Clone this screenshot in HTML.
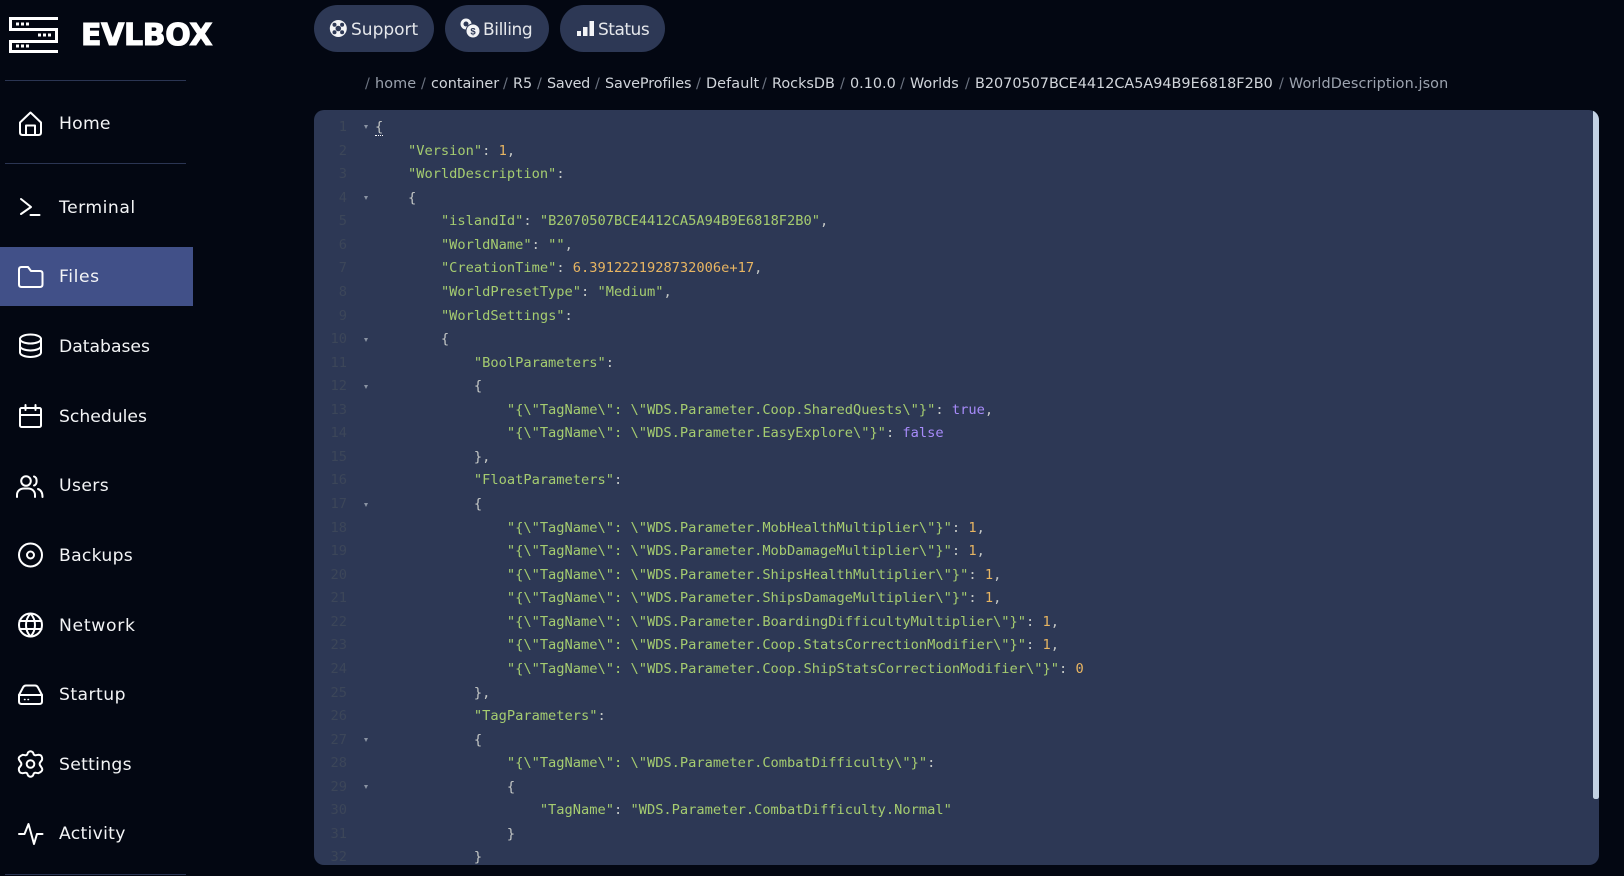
<!DOCTYPE html>
<html><head><meta charset="utf-8"><title>EVLBOX</title>
<style>
html,body{margin:0;padding:0;width:1624px;height:876px;overflow:hidden;background:#030712;}
body{position:relative;font-family:"DejaVu Sans","Liberation Sans",sans-serif;color:#fff}
.a{position:absolute;white-space:pre}
.div{position:absolute;left:5px;width:181px;height:1px;background:#2b3553}
.act{position:absolute;left:0;top:247px;width:193px;height:59px;background:#415088}
.nav{position:absolute;left:59px;font-size:17.2px;line-height:24px;color:#f3f4f6;white-space:pre}
.pill{position:absolute;top:5px;height:47px;border-radius:24px;background:#2d3855}
.pt{position:absolute;top:17.500px;font-size:17px;line-height:24px;color:#e5e7eb;white-space:pre}
.bc{position:absolute;top:73px;font-size:14.4px;line-height:22px;white-space:pre;color:#d1d5db}
.g{color:#9ca3af}
.sl{color:#6b7280}
.panel{position:absolute;left:314px;top:110px;width:1285px;height:755px;background:#2d3855;border-radius:10px;overflow:hidden}
.code,.nums{position:absolute;top:6px;font-family:"DejaVu Sans Mono","Liberation Mono",monospace;font-size:13.7px;line-height:23.57px;white-space:pre}
.code{left:61px;color:#c5c8c6}
.nums{left:0;width:33px;text-align:right;color:#3c4659}
.s{color:#a5cc70}.n{color:#e8b562}.b{color:#a78bfa}
.f{position:absolute;left:50px;width:0;height:0;border-left:2.5px solid transparent;border-right:2.5px solid transparent;border-top:4px solid #8a93a3}
.bar{position:absolute;right:0;top:0;width:6px;height:689px;background:#c3d2e4;border-radius:0 8px 3px 3px}
</style></head><body>
<div class="act"></div>

<svg class="a" style="left:0;top:0" width="240" height="876" viewBox="0 0 240 876" fill="none" stroke="#fff" stroke-width="2" stroke-linecap="round" stroke-linejoin="round">
<!-- logo -->
<g stroke="none" fill="#fff">
<path d="M9 17H58V20H12V28H58V43H12V50H58V53H9V40H55V31H9Z"/>
<rect x="16" y="22.5" width="3" height="3"/><rect x="21" y="22.5" width="3" height="3"/><rect x="26" y="22.5" width="3" height="3"/>
<rect x="38" y="33.5" width="3" height="3"/><rect x="43" y="33.5" width="3" height="3"/><rect x="48" y="33.5" width="3" height="3"/>
<rect x="16" y="44.5" width="3" height="3"/><rect x="21" y="44.5" width="3" height="3"/><rect x="26" y="44.5" width="3" height="3"/>
</g>
<!-- home -->
<path d="M20 122.5L30.5 112.5L41 122.5V132.5Q41 135 38.5 135H22.5Q20 135 20 132.5Z"/>
<path d="M26 135V125.5H35V135"/>
<!-- terminal -->
<path d="M21 199L31 207L21 214"/><path d="M30.5 215H39.5"/>
<!-- folder -->
<path d="M19 269.5Q19 267 21.5 267H28L31 271H40Q42.500 271 42.500 273.500V284.500Q42.500 287 40 287H21.500Q19 287 19 284.500Z"/>
<!-- database -->
<ellipse cx="30.500" cy="339" rx="10.500" ry="4.500"/>
<path d="M20 339V352.500C20 355 25 357 30.500 357S41 355 41 352.500V339"/>
<path d="M20 346C20 348.500 25 350.500 30.500 350.500S41 348.500 41 346"/>
<!-- calendar -->
<rect x="20" y="408" width="21" height="19" rx="1.500"/><path d="M20 415H41M25.500 405V410M35.500 405V410"/>
<!-- users -->
<circle cx="26" cy="481" r="4.800"/><path d="M17 497V495C17 491 20 488.500 24 488.500H28C32 488.500 35 491 35 495V497"/>
<path d="M34 476.500C37.500 477.500 37.500 484.500 34 485.500"/><path d="M38 489C41 490 42.500 492.500 42.500 497"/>
<!-- backups -->
<circle cx="30.500" cy="555" r="11.500"/><circle cx="30.500" cy="555" r="3.500"/>
<!-- network -->
<circle cx="30.500" cy="625" r="11.500"/><path d="M19.500 621H41.500M19.500 629H41.500"/><path d="M30.500 613.500C24.500 620 24.500 630 30.500 636.500C36.500 630 36.500 620 30.500 613.500Z"/>
<!-- startup -->
<path d="M19 695L23 687.500Q24 685.500 26 685.500H35Q37 685.500 38 687.500L42 695V701.500Q42 704 39.500 704H21.500Q19 704 19 701.500Z"/><path d="M19 695H42"/>
<path d="M24.500 699.500H25M28 699.500H28.500" stroke-width="1.500"/>
<!-- settings -->
<circle cx="30.500" cy="764" r="3.800"/>
<path d="M28 752.500Q30.500 750 33 752.500L33.800 754.500Q34.500 755.500 36 755.200L38.200 754.800Q41.500 754.800 42 757.500T41.200 761L39.800 763Q39.500 764 39.800 765L41.200 767Q42.800 769 42 770.500T38.200 773.200L36 772.800Q34.500 772.500 33.800 773.500L33 775.500Q30.500 778 28 775.500L27.200 773.500Q26.500 772.500 25 772.800L22.800 773.200Q19.500 773.200 19 770.500T19.800 767L21.200 765Q21.500 764 21.200 763L19.800 761Q18.200 759 19 757.500T22.800 754.800L25 755.200Q26.500 755.500 27.200 754.500Z"/>
<!-- activity -->
<path d="M19 834H24.500L28.500 824L34 844L37 834H42.500"/>
</svg>

<div class="a" style="left:81px;top:18px;font-family:'DejaVu Sans',sans-serif;font-weight:700;font-size:30px;line-height:36px;letter-spacing:-.35px;color:#fff;-webkit-text-stroke:1.1px #fff">EVLBOX</div>

<div class="div" style="top:80px"></div>
<div class="div" style="top:163px"></div>
<div class="div" style="top:874px"></div>

<div class="nav" style="top:112px;letter-spacing:.25px">Home</div>
<div class="nav" style="top:196px;letter-spacing:.5px">Terminal</div>
<div class="nav" style="top:265px;letter-spacing:.6px">Files</div>
<div class="nav" style="top:335px">Databases</div>
<div class="nav" style="top:405px">Schedules</div>
<div class="nav" style="top:474px;letter-spacing:.4px">Users</div>
<div class="nav" style="top:544px;letter-spacing:.3px">Backups</div>
<div class="nav" style="top:614px;letter-spacing:.7px">Network</div>
<div class="nav" style="top:683px;letter-spacing:.45px">Startup</div>
<div class="nav" style="top:753px;letter-spacing:.3px">Settings</div>
<div class="nav" style="top:822px;letter-spacing:.3px">Activity</div>

<div class="pill" style="left:314px;width:120px"></div>
<div class="pill" style="left:445px;width:104px"></div>
<div class="pill" style="left:560px;width:105px"></div>

<svg class="a" style="left:314px;top:5px" width="360" height="47" viewBox="314 5 360 47">
<circle cx="338.300" cy="28.500" r="8.500" fill="#f3f4f6"/>
<circle cx="338.300" cy="28.500" r="2.800" fill="#2d3855"/>
<g fill="#2d3855"><circle cx="334.500" cy="24.700" r="2"/><circle cx="342.100" cy="24.700" r="2"/><circle cx="334.500" cy="32.300" r="2"/><circle cx="342.100" cy="32.300" r="2"/></g>
<circle cx="466" cy="24" r="5.500" fill="#f3f4f6"/><circle cx="466" cy="24" r="2.500" fill="#2d3855"/>
<circle cx="473" cy="31" r="7" fill="#f3f4f6" stroke="#2d3855" stroke-width="1"/>
<text x="473" y="34.500" font-family="Liberation Sans" font-size="9.500" font-weight="700" fill="#2d3855" text-anchor="middle">$</text>
<rect x="577" y="31" width="4" height="5" fill="#f3f4f6"/><rect x="583" y="27" width="4.500" height="9" fill="#f3f4f6"/><rect x="589.500" y="21" width="4.500" height="15" fill="#f3f4f6"/>
</svg>
<div class="pt" style="left:351px">Support</div>
<div class="pt" style="left:483px;letter-spacing:-.4px">Billing</div>
<div class="pt" style="left:598px;letter-spacing:-.5px">Status</div>

<div class="bc sl" style="left:365px">/</div>
<div class="bc g" style="left:375px;letter-spacing:.1px">home</div>
<div class="bc sl" style="left:421px">/</div>
<div class="bc" style="left:431px">container</div>
<div class="bc sl" style="left:503px">/</div>
<div class="bc" style="left:513px">R5</div>
<div class="bc sl" style="left:537px">/</div>
<div class="bc" style="left:547px;letter-spacing:-.3px">Saved</div>
<div class="bc sl" style="left:595px">/</div>
<div class="bc" style="left:605px;letter-spacing:-.1px">SaveProfiles</div>
<div class="bc sl" style="left:696px">/</div>
<div class="bc" style="left:706px;letter-spacing:.1px">Default</div>
<div class="bc sl" style="left:762px">/</div>
<div class="bc" style="left:772px">RocksDB</div>
<div class="bc sl" style="left:840px">/</div>
<div class="bc" style="left:850px">0.10.0</div>
<div class="bc sl" style="left:900px">/</div>
<div class="bc" style="left:910px">Worlds</div>
<div class="bc sl" style="left:965px">/</div>
<div class="bc" style="left:975px">B2070507BCE4412CA5A94B9E6818F2B0</div>
<div class="bc sl" style="left:1279px">/</div>
<div class="bc g" style="left:1289px;letter-spacing:.1px">WorldDescription.json</div>

<div class="panel">
<div class="nums">1
2
3
4
5
6
7
8
9
10
11
12
13
14
15
16
17
18
19
20
21
22
23
24
25
26
27
28
29
30
31
32
33</div>
<i class="f" style="top:15px"></i><i class="f" style="top:86px"></i><i class="f" style="top:228px"></i><i class="f" style="top:275px"></i><i class="f" style="top:393px"></i><i class="f" style="top:628px"></i><i class="f" style="top:675px"></i>
<div class="code"><span style="border-bottom:1px dotted #fff">{</span>
    <span class="s">"Version"</span>: <span class="n">1</span>,
    <span class="s">"WorldDescription"</span>:
    {
        <span class="s">"islandId"</span>: <span class="s">"B2070507BCE4412CA5A94B9E6818F2B0"</span>,
        <span class="s">"WorldName"</span>: <span class="s">""</span>,
        <span class="s">"CreationTime"</span>: <span class="n">6.3912221928732006e+17</span>,
        <span class="s">"WorldPresetType"</span>: <span class="s">"Medium"</span>,
        <span class="s">"WorldSettings"</span>:
        {
            <span class="s">"BoolParameters"</span>:
            {
                <span class="s">"{\"TagName\": \"WDS.Parameter.Coop.SharedQuests\"}"</span>: <span class="b">true</span>,
                <span class="s">"{\"TagName\": \"WDS.Parameter.EasyExplore\"}"</span>: <span class="b">false</span>
            },
            <span class="s">"FloatParameters"</span>:
            {
                <span class="s">"{\"TagName\": \"WDS.Parameter.MobHealthMultiplier\"}"</span>: <span class="n">1</span>,
                <span class="s">"{\"TagName\": \"WDS.Parameter.MobDamageMultiplier\"}"</span>: <span class="n">1</span>,
                <span class="s">"{\"TagName\": \"WDS.Parameter.ShipsHealthMultiplier\"}"</span>: <span class="n">1</span>,
                <span class="s">"{\"TagName\": \"WDS.Parameter.ShipsDamageMultiplier\"}"</span>: <span class="n">1</span>,
                <span class="s">"{\"TagName\": \"WDS.Parameter.BoardingDifficultyMultiplier\"}"</span>: <span class="n">1</span>,
                <span class="s">"{\"TagName\": \"WDS.Parameter.Coop.StatsCorrectionModifier\"}"</span>: <span class="n">1</span>,
                <span class="s">"{\"TagName\": \"WDS.Parameter.Coop.ShipStatsCorrectionModifier\"}"</span>: <span class="n">0</span>
            },
            <span class="s">"TagParameters"</span>:
            {
                <span class="s">"{\"TagName\": \"WDS.Parameter.CombatDifficulty\"}"</span>:
                {
                    <span class="s">"TagName"</span>: <span class="s">"WDS.Parameter.CombatDifficulty.Normal"</span>
                }
            }</div>
<div class="bar"></div>
</div>
</body></html>
